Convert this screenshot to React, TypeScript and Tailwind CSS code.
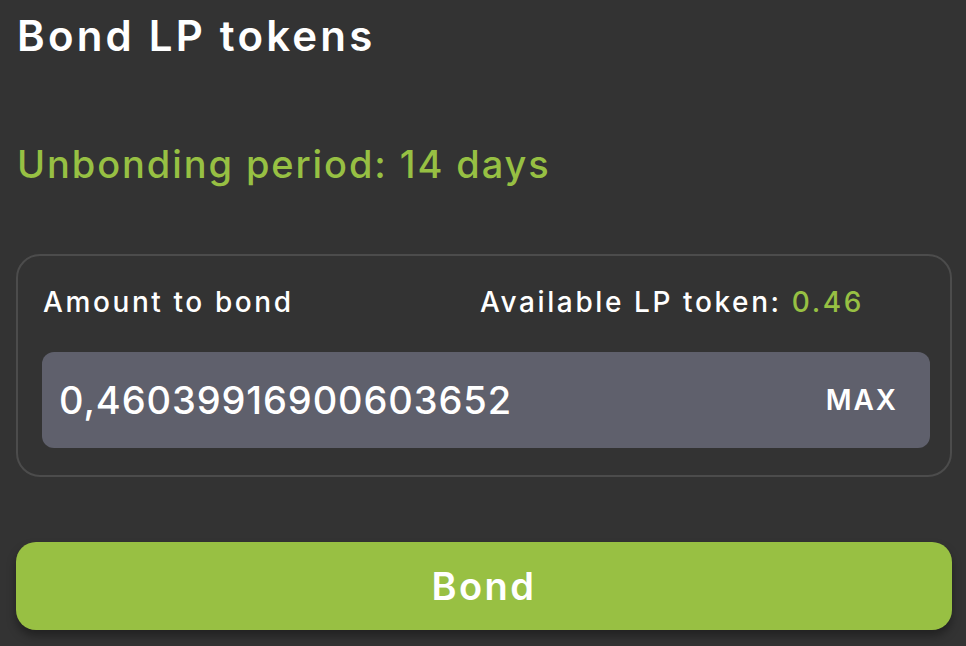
export default function App() {
  return (
    <div
      className="w-[966px] h-[646px] overflow-hidden bg-[#333333] pl-4 pr-[14px] text-white"
      style={{ fontFamily: "Inter, 'Noto Sans', sans-serif" }}
    >
      <h1 className="pl-px pt-[8px] text-[42px] leading-[56px] font-semibold tracking-[3.2px]">
        Bond LP tokens
      </h1>

      <p className="pl-px mt-[76px] text-[38px] leading-[48px] font-medium text-[#97c043] tracking-[1.9px]">
        Unbonding period: 14 days
      </p>

      <div className="mt-[66px] h-[223px] rounded-[24px] border-2 border-[#4c4c4c] pl-[24px] pr-[20px] pt-[26px]">
        <div className="flex items-center justify-between pr-[66px] text-[28px] leading-[40px] font-medium tracking-[2.6px]">
          <span className="pl-px">Amount to bond</span>
          <span>
            Available LP token: <span className="text-[#97c043]">0.46</span>
          </span>
        </div>
        <div className="mt-[30px] flex h-[96px] items-center justify-between rounded-[12px] bg-[#5f606c] pl-[17px] pr-[32px]">
          <span className="text-[38px] font-medium tracking-[0.9px]">0,46039916900603652</span>
          <span className="text-[28px] font-semibold tracking-[2px]">MAX</span>
        </div>
      </div>

      <button className="mt-[65px] flex h-[88px] w-full items-center justify-center rounded-[20px] bg-[#98c043] text-[38px] font-semibold tracking-[2.5px] text-white shadow-[0_6px_10px_rgba(0,0,0,0.35)]">
        Bond
      </button>
    </div>
  );
}
